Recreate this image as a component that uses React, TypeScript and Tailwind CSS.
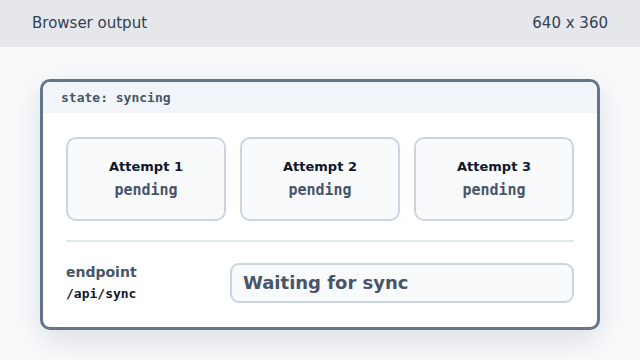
export default function App() {
    const attempts = [1, 2, 3];
    return (
        <div className="h-[360px] w-[640px] overflow-hidden bg-[#f8fafc] font-['DejaVu_Sans',sans-serif]">
            <header className="flex h-[47px] items-center justify-between bg-[#e5e7eb] px-8 text-[15px] text-[#334155]">
                <span>Browser output</span>
                <span>640 x 360</span>
            </header>

            <main className="px-10 pt-8">
                <div className="overflow-hidden rounded-[10px] border-[3px] border-[#64748b] bg-white shadow-[0_10px_30px_rgba(15,23,42,0.12)]">
                    <div className="flex h-[31px] items-center bg-[#f1f5f9] pl-[18px] font-['DejaVu_Sans_Mono',monospace] text-[13px] font-bold text-[#475569]">
                        state: syncing
                    </div>

                    <div className="px-[23px] pt-[24px] pb-[23px]">
                        <div className="grid grid-cols-3 gap-[14px]">
                            {attempts.map((n) => (
                                <div
                                    key={n}
                                    className="flex h-[84px] flex-col items-center justify-center rounded-[10px] border-2 border-[#cbd5e1] bg-[#f8fafc]"
                                >
                                    <div className="text-[13px] font-bold text-[#0f172a]">Attempt {n}</div>
                                    <div className="mt-[3px] font-['DejaVu_Sans_Mono',monospace] text-[15px] font-bold text-[#475569]">
                                        pending
                                    </div>
                                </div>
                            ))}
                        </div>

                        <div className="mt-[19px] h-[2px] bg-[#e2e8f0]" />

                        <div className="mt-5 grid grid-cols-[150px_1fr] items-center gap-[14px]">
                            <div>
                                <div className="text-[14px] font-bold text-[#475569]">endpoint</div>
                                <div className="mt-[1px] font-['DejaVu_Sans_Mono',monospace] text-[13px] font-bold text-[#0f172a]">
                                    /api/sync
                                </div>
                            </div>
                            <div className="flex h-[40px] items-center rounded-[9px] border-2 border-[#cbd5e1] bg-[#f8fafc] px-[11px] text-[18px] font-bold text-[#475569]">
                                Waiting for sync
                            </div>
                        </div>
                    </div>
                </div>
            </main>
        </div>
    );
}
